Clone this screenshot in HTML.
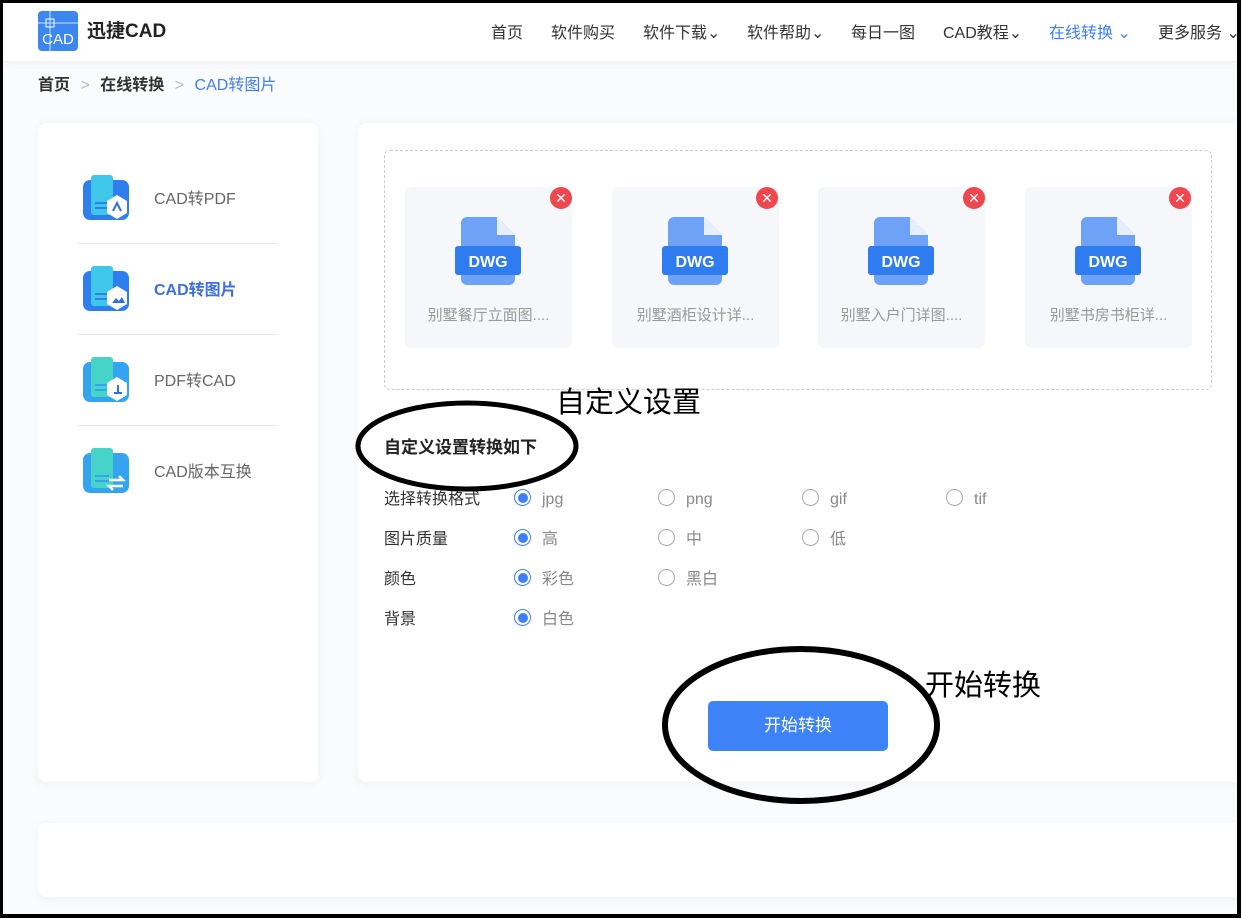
<!DOCTYPE html>
<html><head><meta charset="utf-8">
<style>
*{margin:0;padding:0;box-sizing:border-box}
body{width:1241px;height:918px;position:relative;overflow:hidden;background:#fafbfc;font-family:"Liberation Sans","Noto Sans CJK SC",sans-serif;color:#333;line-height:24px}
.a{position:absolute}
.frame{position:absolute;left:0;top:0;width:1241px;height:918px;border:3px solid #000;border-right-width:4px;border-bottom-width:4px;z-index:50;pointer-events:none}
.nav{left:0;top:0;width:1241px;height:61px;background:#fff;box-shadow:0 2px 8px rgba(0,0,0,.05)}
.nav span{position:absolute;top:22px;font-size:16px;color:#333;white-space:nowrap;line-height:24px}
.panel{background:#fff;border-radius:8px;box-shadow:0 2px 10px rgba(30,60,120,.06)}
.side-item{position:absolute;left:78px;width:200px;height:91px;border-bottom:1px solid #e8e8e8}
.side-item .t{position:absolute;left:76px;top:35px;font-size:16px;color:#666;line-height:24px}
.card{position:absolute;top:187px;width:167px;height:161px;background:#f5f7fa;border-radius:6px}
.card .nm{position:absolute;left:0;width:100%;top:117px;text-align:center;font-size:15px;color:#999;line-height:24px}
.card svg{position:absolute;left:50px;top:30px}
.lbl{position:absolute;left:384px;font-size:16px;color:#333;line-height:24px}
.r{position:absolute;width:17px;height:17px;border-radius:50%;border:1px solid #aaa;background:#fff}
.r.on{border:1px solid #3d7ff6}
.r.on::after{content:"";position:absolute;left:2.5px;top:2.5px;width:10px;height:10px;border-radius:50%;background:#3d7ff6}
.rt{position:absolute;font-size:16px;color:#888;line-height:24px}
.xb{position:absolute;top:187px;width:22px;height:22px;border-radius:50%;background:#f0474f;color:#fff;font-size:14px;line-height:22px;text-align:center}
</style></head><body>
<div class="frame"></div>
<div class="a nav">
  <svg class="a" style="left:38px;top:11px" width="40" height="40" viewBox="0 0 40 40"><rect width="40" height="40" rx="4" fill="#3b86ef"/><path d="M0 12H40M12 0V40" stroke="#cfe2ff" stroke-width="1"/><rect x="8" y="8" width="8" height="8" fill="none" stroke="#fff" stroke-width="1"/><text x="20" y="33" text-anchor="middle" fill="#fff" font-family="Liberation Sans" font-size="15">CAD</text></svg>
  <span style="left:87px;top:20px;font-size:19px;color:#222;font-weight:bold;line-height:24px">迅捷CAD</span>
  <span style="left:491px">首页</span>
  <span style="left:551px">软件购买</span>
  <span style="left:643px">软件下载⌄</span>
  <span style="left:747px">软件帮助⌄</span>
  <span style="left:851px">每日一图</span>
  <span style="left:943px">CAD教程⌄</span>
  <span style="left:1049px;color:#3d7ff6">在线转换 ⌄</span>
  <span style="left:1158px">更多服务 ⌄</span>
</div>
<div class="a" style="left:38px;top:74px;font-size:16px;white-space:nowrap;line-height:24px"><b style="color:#333">首页</b> <span style="color:#bbb;margin:0 6px">&gt;</span> <b style="color:#333">在线转换</b> <span style="color:#bbb;margin:0 6px">&gt;</span> <span style="color:#3d7ff6">CAD转图片</span></div>

<div class="a panel" style="left:38px;top:123px;width:280px;height:659px"></div>
<div class="side-item" style="top:153px"><div class="t">CAD转PDF</div></div>
<div class="side-item" style="top:244px"><div class="t" style="color:#3d6fe0;font-weight:bold">CAD转图片</div></div>
<div class="side-item" style="top:335px"><div class="t">PDF转CAD</div></div>
<div class="side-item" style="top:426px;border:none"><div class="t">CAD版本互换</div></div>
<svg class="a" style="left:83px;top:175px" width="48" height="48" viewBox="0 0 48 48"><rect x="0" y="5" width="46" height="40" rx="7" fill="#2e7ef0"/><rect x="8" y="0" width="22" height="40" rx="3" fill="#3ec7e8"/><path d="M12 28h14M12 33h14" stroke="#2e7ef0" stroke-width="2"/><path d="M34 20l10 6v12l-10 6-10-6V26z" fill="#fff"/><path d="M30 36l4-8 4 8" stroke="#3070e0" stroke-width="2" fill="none"/></svg>
<svg class="a" style="left:83px;top:266px" width="48" height="48" viewBox="0 0 48 48"><rect x="0" y="5" width="46" height="40" rx="7" fill="#2e7ef0"/><rect x="8" y="0" width="22" height="40" rx="3" fill="#3ec7e8"/><path d="M12 28h14M12 33h14" stroke="#2e7ef0" stroke-width="2"/><path d="M34 20l10 6v12l-10 6-10-6V26z" fill="#fff"/><path d="M29 37l4-5 3 3 3-4 3 6z" fill="#3070e0"/></svg>
<svg class="a" style="left:83px;top:357px" width="48" height="48" viewBox="0 0 48 48"><rect x="0" y="5" width="46" height="40" rx="7" fill="#35a4f0"/><rect x="8" y="0" width="22" height="40" rx="3" fill="#46d4c8"/><path d="M12 28h14M12 33h14" stroke="#35a4f0" stroke-width="2"/><path d="M34 20l10 6v12l-10 6-10-6V26z" fill="#fff"/><path d="M31 36h8M35 28v9" stroke="#3070e0" stroke-width="2"/></svg>
<svg class="a" style="left:83px;top:448px" width="48" height="48" viewBox="0 0 48 48"><rect x="0" y="5" width="46" height="40" rx="7" fill="#35a4f0"/><rect x="8" y="0" width="22" height="40" rx="3" fill="#46d4c8"/><path d="M12 28h14M12 33h14" stroke="#35a4f0" stroke-width="2"/><path d="M26 32h14l-4-4M40 38H26l4 4" stroke="#fff" stroke-width="2.5" fill="none"/></svg>

<div class="a panel" style="left:358px;top:123px;width:900px;height:659px"></div>
<div class="a" style="left:384px;top:150px;width:828px;height:240px;border:1px dashed #c8cbd2;border-radius:6px"></div>
<div class="card" style="left:405px"><svg width="66" height="70" viewBox="0 0 66 70"><path d="M6 0h36l18 18v44a6 6 0 0 1-6 6H12a6 6 0 0 1-6-6V6a6 6 0 0 1 6-6z" fill="#6ea2f7"/><path d="M42 0v18h18z" fill="#e7efff"/><rect x="0" y="29" width="66" height="29" rx="3" fill="#2f7cf0"/><text x="33" y="50" text-anchor="middle" fill="#fff" font-family="Liberation Sans" font-weight="bold" font-size="16">DWG</text></svg><div class="nm">别墅餐厅立面图....</div></div>
<div class="card" style="left:612px"><svg width="66" height="70" viewBox="0 0 66 70"><path d="M6 0h36l18 18v44a6 6 0 0 1-6 6H12a6 6 0 0 1-6-6V6a6 6 0 0 1 6-6z" fill="#6ea2f7"/><path d="M42 0v18h18z" fill="#e7efff"/><rect x="0" y="29" width="66" height="29" rx="3" fill="#2f7cf0"/><text x="33" y="50" text-anchor="middle" fill="#fff" font-family="Liberation Sans" font-weight="bold" font-size="16">DWG</text></svg><div class="nm">别墅酒柜设计详...</div></div>
<div class="card" style="left:818px"><svg width="66" height="70" viewBox="0 0 66 70"><path d="M6 0h36l18 18v44a6 6 0 0 1-6 6H12a6 6 0 0 1-6-6V6a6 6 0 0 1 6-6z" fill="#6ea2f7"/><path d="M42 0v18h18z" fill="#e7efff"/><rect x="0" y="29" width="66" height="29" rx="3" fill="#2f7cf0"/><text x="33" y="50" text-anchor="middle" fill="#fff" font-family="Liberation Sans" font-weight="bold" font-size="16">DWG</text></svg><div class="nm">别墅入户门详图....</div></div>
<div class="card" style="left:1025px"><svg width="66" height="70" viewBox="0 0 66 70"><path d="M6 0h36l18 18v44a6 6 0 0 1-6 6H12a6 6 0 0 1-6-6V6a6 6 0 0 1 6-6z" fill="#6ea2f7"/><path d="M42 0v18h18z" fill="#e7efff"/><rect x="0" y="29" width="66" height="29" rx="3" fill="#2f7cf0"/><text x="33" y="50" text-anchor="middle" fill="#fff" font-family="Liberation Sans" font-weight="bold" font-size="16">DWG</text></svg><div class="nm">别墅书房书柜详...</div></div>
<div class="xb" style="left:550px">✕</div>
<div class="xb" style="left:756px">✕</div>
<div class="xb" style="left:963px">✕</div>
<div class="xb" style="left:1169px">✕</div>

<div class="a" style="left:556px;top:384px;font-size:29px;color:#000;white-space:nowrap;line-height:38px">自定义设置</div>
<div class="a" style="left:384px;top:436px;font-size:17px;font-weight:bold;color:#222;line-height:24px">自定义设置转换如下</div>

<div class="lbl" style="top:488px">选择转换格式</div>
<div class="r on" style="left:514px;top:489px"></div><div class="rt" style="left:542px;top:488px">jpg</div>
<div class="r" style="left:658px;top:489px"></div><div class="rt" style="left:686px;top:488px">png</div>
<div class="r" style="left:802px;top:489px"></div><div class="rt" style="left:830px;top:488px">gif</div>
<div class="r" style="left:946px;top:489px"></div><div class="rt" style="left:974px;top:488px">tif</div>
<div class="lbl" style="top:528px">图片质量</div>
<div class="r on" style="left:514px;top:529px"></div><div class="rt" style="left:542px;top:528px">高</div>
<div class="r" style="left:658px;top:529px"></div><div class="rt" style="left:686px;top:528px">中</div>
<div class="r" style="left:802px;top:529px"></div><div class="rt" style="left:830px;top:528px">低</div>
<div class="lbl" style="top:568px">颜色</div>
<div class="r on" style="left:514px;top:569px"></div><div class="rt" style="left:542px;top:568px">彩色</div>
<div class="r" style="left:658px;top:569px"></div><div class="rt" style="left:686px;top:568px">黑白</div>
<div class="lbl" style="top:608px">背景</div>
<div class="r on" style="left:514px;top:609px"></div><div class="rt" style="left:542px;top:608px">白色</div>

<div class="a" style="left:708px;top:701px;width:180px;height:50px;background:#3d82f7;border-radius:5px;color:#fff;font-size:17px;line-height:50px;text-align:center">开始转换</div>
<div class="a" style="left:925px;top:667px;font-size:29px;color:#000;white-space:nowrap;line-height:38px">开始转换</div>

<div class="a panel" style="left:38px;top:823px;width:1220px;height:74px"></div>

<svg class="a" style="left:0;top:0;z-index:40" width="1241" height="918">
<ellipse cx="467" cy="446" rx="109" ry="43" fill="none" stroke="#000" stroke-width="5"/>
<ellipse cx="801" cy="725" rx="136" ry="76" fill="none" stroke="#000" stroke-width="6"/>
</svg>
</body></html>
